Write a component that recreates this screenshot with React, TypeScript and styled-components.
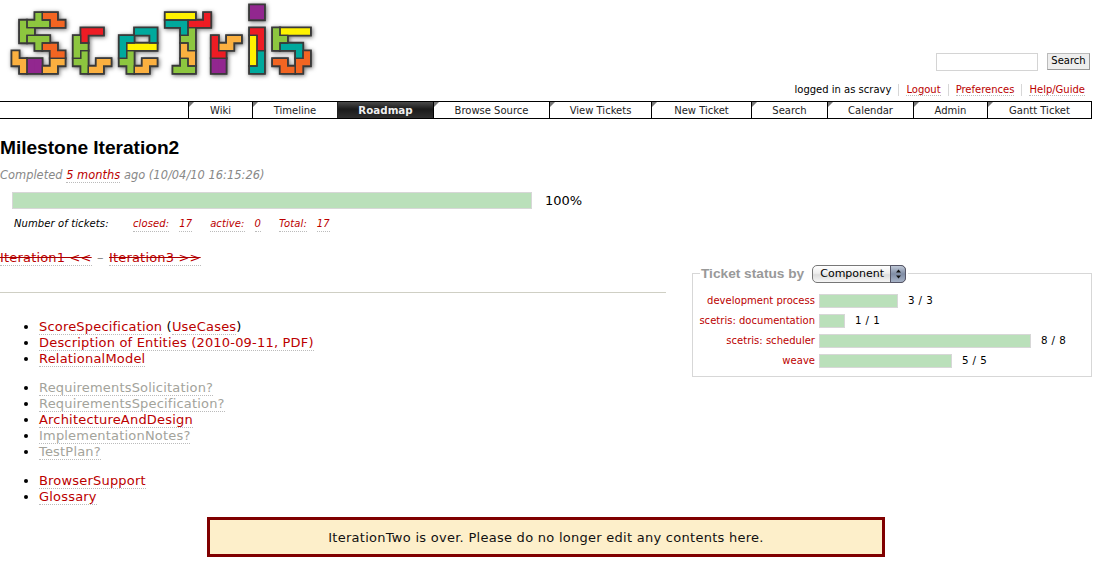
import React from "react";
import styled, { createGlobalStyle } from "styled-components";

const Global = createGlobalStyle`
  html, body { margin: 0; padding: 0; background: #fff; }
  body { font-family: "DejaVu Sans", Verdana, sans-serif; font-size: 13px; color: #000; }
`;

const Page = styled.div`
  width: 1098px;
  height: 566px;
  overflow: hidden;
`;

const Header = styled.header`
  height: 101px;
  display: flex;
  justify-content: space-between;
`;

const LogoSvg = styled.svg`
  width: 330px;
  height: 90px;
  flex: none;
  filter: drop-shadow(1px 1px 2px rgba(0, 0, 0, 0.55));
`;

const HeaderRight = styled.div`
  width: 400px;
  padding: 53px 8px 0 0;
  box-sizing: content-box;
  margin-right: 0;
  display: flex;
  flex-direction: column;
  align-items: flex-end;
`;

const SearchForm = styled.form`
  display: flex;
  align-items: flex-start;
  gap: 9px;
  margin: 0;
`;

const SearchInput = styled.input`
  width: 102px;
  height: 18px;
  box-sizing: border-box;
  border: 1px solid #d4d4d4;
  background: #fff;
  padding: 0 3px;
  margin: 0;
`;

const SearchButton = styled.button`
  width: 43px;
  height: 17px;
  box-sizing: border-box;
  border: 1px solid #bbb;
  border-bottom-color: #999;
  border-right-color: #999;
  background: #eee;
  font: 10px/14px "DejaVu Sans", sans-serif;
  color: #000;
  padding: 0 0 1px;
  margin: 0;
`;

const MetaNav = styled.div`
  display: flex;
  align-items: center;
  margin-top: 12px;
  margin-right: 5px;
  height: 14px;
  font-size: 10px;
`;

const MetaItem = styled.span`
  padding: 0 7px;
  line-height: 12px;
  border-left: 1px solid #d7d7d7;
  &:first-child { border-left: 0; }
  &:last-child { padding-right: 0; }
`;

const Link = styled.a<{ $missing?: boolean }>`
  color: ${(p) => (p.$missing ? "#a3a39b" : "#b00")};
  border-bottom: 1px dotted #bbb;
  text-decoration: none;
`;

const MainNav = styled.nav`
  width: 1092px;
  height: 18px;
  box-sizing: border-box;
  border: 1px solid #000;
  border-width: 1px 1px 1.5px 0;
  display: flex;
  justify-content: flex-end;
  background: #fff;
`;

const NavItem = styled.a<{ $w: number; $active?: boolean }>`
  position: relative;
  width: ${(p) => p.$w}px;
  box-sizing: border-box;
  border-left: 1px solid ${(p) => (p.$active ? "#222" : "#000")};
  text-align: center;
  font-size: ${(p) => (p.$active ? "10.3px" : "10px")};
  font-weight: ${(p) => (p.$active ? 700 : 400)};
  line-height: 17px;
  color: ${(p) => (p.$active ? "#eee" : "#222")};
  background: ${(p) => (p.$active ? "linear-gradient(#4a4a4a, #1a1a1a 45%, #2e2e2e)" : "#fff")};
  &::before {
    content: "";
    display: ${(p) => (p.$active ? "none" : "block")};
    position: absolute;
    left: 0;
    top: 0;
    width: 0;
    height: 0;
    border-style: solid;
    border-width: 5px 5px 0 0;
    border-color: #777 transparent transparent transparent;
  }
`;

const Content = styled.main`
  display: flex;
  justify-content: space-between;
  width: 1092px;
`;

const LeftCol = styled.div`
  width: 666px;
  flex: none;
`;

const Title = styled.h1`
  margin: 19px 0 0;
  font: 700 19.2px/20px "Liberation Sans", Arial, sans-serif;
  color: #000;
  letter-spacing: -0.05px;
`;

const Completed = styled.p`
  margin: 9px 0 0;
  line-height: 16px;
  font-size: 11.4px;
  letter-spacing: 0.04px;
  font-style: italic;
  color: #888;
`;

const ProgressRow = styled.div`
  display: flex;
  align-items: center;
  margin: 9px 0 0 12px;
  height: 17px;
`;

const ProgressBar = styled.div`
  width: 520px;
  height: 17px;
  box-sizing: border-box;
  background: #bae0ba;
  border: 1px solid #d7d7d7;
`;

const Percent = styled.span`
  margin-left: 13px;
  font-size: 13px;
`;

const Stats = styled.div`
  display: flex;
  margin: 8px 0 0 14px;
  font-size: 10px;
  font-style: italic;
  line-height: 14px;
  letter-spacing: 0.1px;
`;

const StatLabel = styled.span`
  width: 119px;
  flex: none;
`;

const StatGroup = styled.span`
  display: flex;
  gap: 10px;
  margin-right: 18px;
`;

const PrevNext = styled.div`
  margin-top: 18px;
  font-size: 13px;
  letter-spacing: 0.18px;
  line-height: 16px;
  color: #888;
`;

const Dash = styled.span`
  margin: 0 1px;
`;

const StruckLink = styled(Link)`
  text-decoration: line-through;
  text-decoration-color: #a00;
`;

const Rule = styled.hr`
  margin: 26px 0 0;
  border: 0;
  border-top: 1px solid #cfcfc4;
`;

const WikiList = styled.ul`
  margin: 13px 0 0;
  padding: 0 0 0 39px;
  font-size: 13px;
  letter-spacing: 0.19px;
  line-height: 16px;
  &:first-of-type { margin-top: 26px; }
`;

const Aside = styled.fieldset`
  width: 400px;
  height: 114px;
  box-sizing: border-box;
  margin: 144px 0 0;
  padding: 0 8px 0 0;
  border: 1px solid #d7d7d7;
  min-inline-size: 0;
  flex: none;
`;

const Legend = styled.legend`
  display: flex;
  align-items: center;
  gap: 8px;
  margin-left: 7px;
  padding: 0 2px 0 1px;
  height: 20px;
  font: 700 13.7px "Liberation Sans", Arial, sans-serif;
  color: #999;
`;

const SelectWrap = styled.span`
  position: relative;
  display: inline-block;
  width: 94px;
  height: 18px;
  margin-top: 1px;
`;

const Select = styled.select`
  appearance: none;
  width: 94px;
  height: 18px;
  box-sizing: border-box;
  border: 1px solid #777;
  border-radius: 5px;
  padding: 0 0 0 7px;
  margin: 0;
  font: 11px "DejaVu Sans", sans-serif;
  color: #000;
  background: linear-gradient(#fff, #eee 45%, #ddd 55%, #f6f6f6);
`;

const Stepper = styled.span`
  position: absolute;
  right: 0;
  top: 0;
  width: 16px;
  height: 18px;
  box-sizing: border-box;
  border: 1px solid #556;
  border-radius: 0 5px 5px 0;
  background: linear-gradient(#c0c9d8, #7f8ca4 50%, #a6b2c6);
  display: flex;
  align-items: center;
  justify-content: center;
`;

const StatusRows = styled.div`
  display: grid;
  grid-template-columns: 122px 1fr;
  column-gap: 4px;
  row-gap: 6px;
  padding-top: 11px;
`;

const RowLabel = styled.div`
  text-align: right;
  font-size: 10px;
  line-height: 14px;
  letter-spacing: 0.02px;
  color: #b00;
`;

const RowBar = styled.div`
  display: flex;
  align-items: center;
  height: 14px;
`;

const Bar = styled.div<{ $w: number }>`
  width: ${(p) => p.$w}px;
  height: 14px;
  box-sizing: border-box;
  background: #bae0ba;
  border: 1px solid #d7d7d7;
`;

const Count = styled.span`
  margin-left: 10px;
  font-size: 10.3px;
  letter-spacing: 0.4px;
  position: relative;
  bottom: 1px;
`;

const Notice = styled.div`
  width: 678px;
  height: 40px;
  box-sizing: border-box;
  margin: 12px 0 0 207px;
  border: 3px solid #800000;
  background: #fdefca;
  text-align: center;
  font-size: 13px;
  letter-spacing: 0.27px;
  line-height: 35px;
  color: #111;
`;

const C = { g: "#8dc63f", o: "#f26522", a: "#fbb040", p: "#92278f", t: "#00a99d", r: "#ed1c24", y: "#fff200" };
type P = [string, [number, number][]];
const pieces: P[] = [
  [C.g, [[3,1],[2,2],[3,2],[4,2]]],
  [C.o, [[4,1],[5,1],[5,2],[6,2]]],
  [C.g, [[1,2],[1,3],[1,4],[2,3]]],
  [C.g, [[2,4],[3,4],[4,4],[3,5]]],
  [C.o, [[4,5],[5,5],[5,6],[6,6]]],
  [C.a, [[0,6],[0,7],[1,7],[1,8]]],
  [C.p, [[2,7],[3,7],[2,8],[3,8]]],
  [C.a, [[5,7],[6,7],[4,8],[5,8]]],
  [C.r, [[9,3],[10,3],[11,3],[9,4]]],
  [C.g, [[8,4],[8,5],[8,6],[9,5]]],
  [C.g, [[9,6],[9,7],[9,8],[8,7]]],
  [C.a, [[11,7],[12,7],[10,8],[11,8]]],
  [C.t, [[14,4],[15,4],[14,5],[14,6]]],
  [C.t, [[16,3],[17,3],[18,3],[18,4]]],
  [C.y, [[15,5],[16,5],[17,5],[18,5]]],
  [C.g, [[15,6],[15,7],[15,8],[14,7]]],
  [C.a, [[17,7],[18,7],[16,8],[17,8]]],
  [C.y, [[20,1],[21,1],[22,1],[23,1]]],
  [C.t, [[20,2],[21,2],[22,2],[22,3]]],
  [C.r, [[23,2],[24,2],[25,2],[25,1]]],
  [C.g, [[23,3],[23,4],[23,5],[22,4]]],
  [C.a, [[22,5],[22,6],[23,6],[23,7]]],
  [C.g, [[21,8],[22,8],[23,8],[22,7]]],
  [C.r, [[26,4],[26,5],[26,6],[27,6]]],
  [C.p, [[26,7],[27,7],[26,8],[27,8]]],
  [C.a, [[28,4],[29,4],[27,5],[28,5]]],
  [C.p, [[31,0],[32,0],[31,1],[32,1]]],
  [C.r, [[31,3],[32,3],[32,4],[32,5]]],
  [C.t, [[32,6],[32,7],[32,8],[31,8]]],
  [C.y, [[31,4],[31,5],[31,6],[31,7]]],
  [C.y, [[35,3],[36,3],[37,3],[38,3]]],
  [C.g, [[34,3],[34,4],[34,5],[35,4]]],
  [C.t, [[35,5],[36,5],[37,5],[37,6]]],
  [C.o, [[34,7],[35,7],[35,8],[36,8]]],
  [C.o, [[38,6],[38,7],[37,7],[37,8]]],
];

const cellsToPath = (cells: [number, number][]) =>
  cells.map(([c, r]) => `M${35 + 23 * c} ${14 + 23 * r}h23v23h-23z`).join("");

const Logo = () => (
  <LogoSvg viewBox="0 0 990 270" aria-label="SceTris logo">
    {pieces.map(([fill, cells], i) => {
      const d = cellsToPath(cells);
      return (
        <path key={`d${i}`} d={d} fill="#3a3a3a" stroke="#3a3a3a" strokeWidth={7} strokeLinejoin="miter" />
      );
    })}
    {pieces.map(([fill, cells], i) => {
      const d = cellsToPath(cells);
      return <path key={`f${i}`} d={d} fill={fill} stroke={fill} strokeWidth={0} />;
    })}
    {pieces.map(([, cells], i) => {
      const set = new Set(cells.map(([c, r]) => `${c},${r}`));
      const edges = cells
        .map(([c, r]) => {
          const x = 35 + 23 * c;
          const y = 14 + 23 * r;
          return [
            set.has(`${c},${r - 1}`) ? "" : `M${x} ${y}h23`,
            set.has(`${c},${r + 1}`) ? "" : `M${x} ${y + 23}h23`,
            set.has(`${c - 1},${r}`) ? "" : `M${x} ${y}v23`,
            set.has(`${c + 1},${r}`) ? "" : `M${x + 23} ${y}v23`,
          ].join("");
        })
        .join("");
      return <path key={`e${i}`} d={edges} fill="none" stroke="#3a3a3a" strokeWidth={4} strokeLinecap="square" />;
    })}
  </LogoSvg>
);

const navItems: [string, number, boolean?][] = [
  ["Wiki", 64],
  ["Timeline", 85],
  ["Roadmap", 96, true],
  ["Browse Source", 116],
  ["View Tickets", 102],
  ["New Ticket", 100],
  ["Search", 76],
  ["Calendar", 86],
  ["Admin", 74],
  ["Gantt Ticket", 104],
];

const status: [string, number, string][] = [
  ["development process", 79, "3 / 3"],
  ["scetris: documentation", 26, "1 / 1"],
  ["scetris: scheduler", 212, "8 / 8"],
  ["weave", 133, "5 / 5"],
];

export default function App() {
  return (
    <Page>
      <Global />
      <Header>
        <Logo />
        <HeaderRight>
          <SearchForm>
            <SearchInput />
            <SearchButton type="button">Search</SearchButton>
          </SearchForm>
          <MetaNav>
            <MetaItem>logged in as scravy</MetaItem>
            <MetaItem><Link>Logout</Link></MetaItem>
            <MetaItem><Link>Preferences</Link></MetaItem>
            <MetaItem><Link>Help/Guide</Link></MetaItem>
          </MetaNav>
        </HeaderRight>
      </Header>
      <MainNav>
        {navItems.map(([t, w, a]) => (
          <NavItem key={t} $w={w} $active={a}>{t}</NavItem>
        ))}
      </MainNav>
      <Content>
        <LeftCol>
          <Title>Milestone Iteration2</Title>
          <Completed>Completed <Link>5 months</Link> ago (10/04/10 16:15:26)</Completed>
          <ProgressRow>
            <ProgressBar />
            <Percent>100%</Percent>
          </ProgressRow>
          <Stats>
            <StatLabel>Number of tickets:</StatLabel>
            <StatGroup><Link>closed:</Link><Link>17</Link></StatGroup>
            <StatGroup><Link>active:</Link><Link>0</Link></StatGroup>
            <StatGroup><Link>Total:</Link><Link>17</Link></StatGroup>
          </Stats>
          <PrevNext>
            <StruckLink>Iteration1 &lt;&lt;</StruckLink> <Dash>–</Dash> <StruckLink>Iteration3 &gt;&gt;</StruckLink>
          </PrevNext>
          <Rule />
          <WikiList>
            <li><Link>ScoreSpecification</Link> (<Link>UseCases</Link>)</li>
            <li><Link>Description of Entities (2010-09-11, PDF)</Link></li>
            <li><Link>RelationalModel</Link></li>
          </WikiList>
          <WikiList>
            <li><Link $missing>RequirementsSolicitation?</Link></li>
            <li><Link $missing>RequirementsSpecification?</Link></li>
            <li><Link>ArchitectureAndDesign</Link></li>
            <li><Link $missing>ImplementationNotes?</Link></li>
            <li><Link $missing>TestPlan?</Link></li>
          </WikiList>
          <WikiList>
            <li><Link>BrowserSupport</Link></li>
            <li><Link>Glossary</Link></li>
          </WikiList>
        </LeftCol>
        <Aside>
          <Legend>
            Ticket status by
            <SelectWrap>
              <Select defaultValue="Component"><option>Component</option></Select>
              <Stepper>
                <svg width="7" height="12" viewBox="0 0 7 12">
                  <path d="M3.5 1.5 6 4.5H1z" fill="#111" />
                  <path d="M3.5 10.5 6 7.5H1z" fill="#111" />
                </svg>
              </Stepper>
            </SelectWrap>
          </Legend>
          <StatusRows>
            {status.map(([label, w, count]) => (
              <React.Fragment key={label}>
                <RowLabel>{label}</RowLabel>
                <RowBar>
                  <Bar $w={w} />
                  <Count>{count}</Count>
                </RowBar>
              </React.Fragment>
            ))}
          </StatusRows>
        </Aside>
      </Content>
      <Notice>IterationTwo is over. Please do no longer edit any contents here.</Notice>
    </Page>
  );
}
